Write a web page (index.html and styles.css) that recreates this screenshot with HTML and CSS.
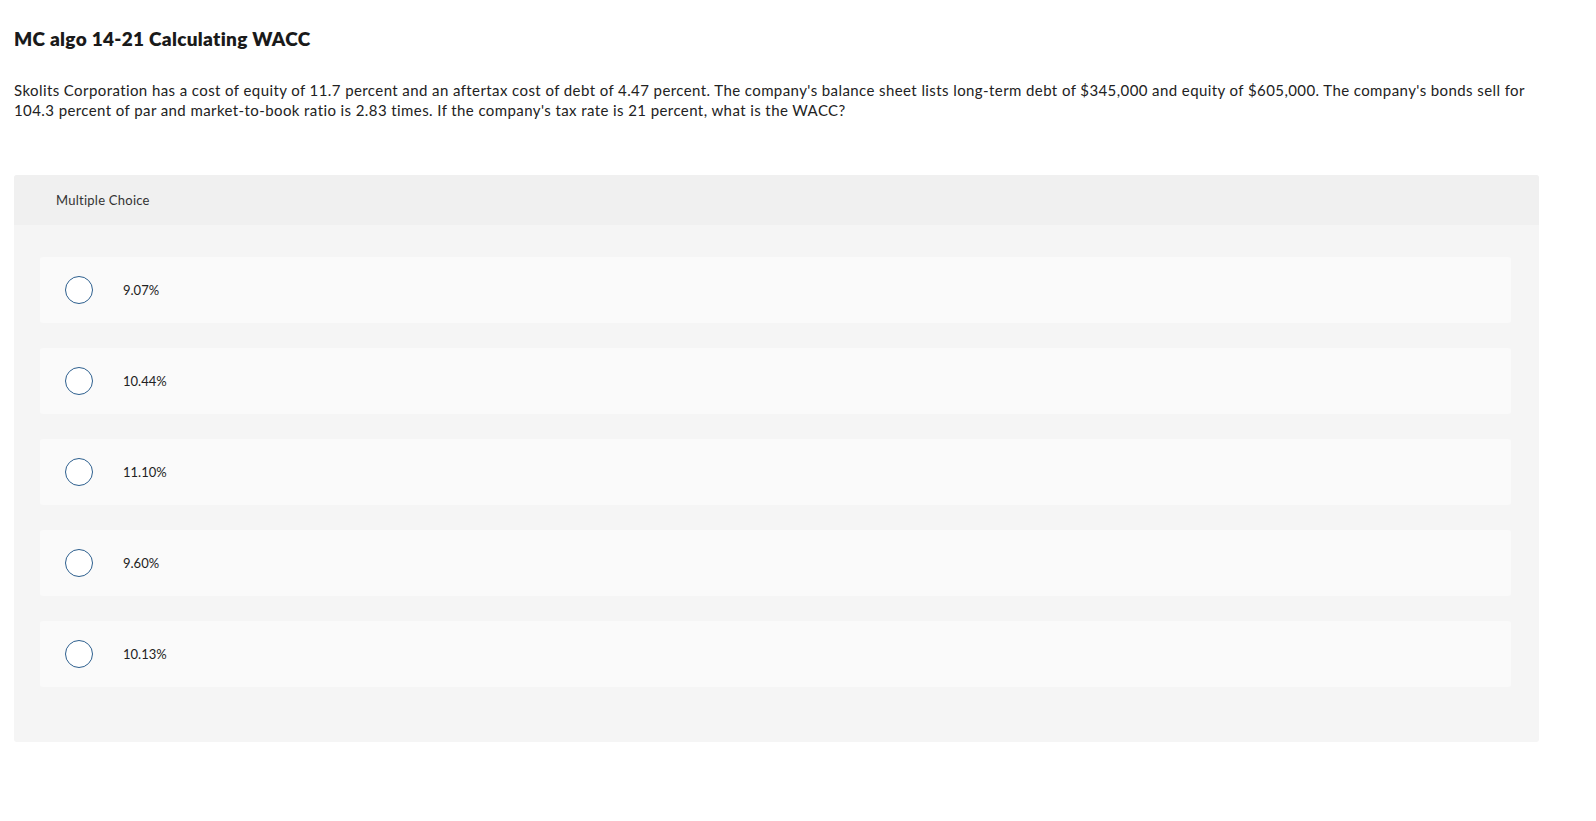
FILE: index.html
```html
<!DOCTYPE html>
<html lang="en">
<head>
<meta charset="utf-8">
<title>MC algo 14-21 Calculating WACC</title>
<link rel="stylesheet" href="styles.css">
</head>
<body>
<main class="page">
  <h1 class="title">MC algo 14-21 Calculating WACC</h1>
  <p class="prompt">Skolits Corporation has a cost of equity of 11.7 percent and an aftertax cost of debt of 4.47 percent. The company's balance sheet lists long-term debt of $345,000 and equity of $605,000. The company's bonds sell for 104.3 percent of par and market-to-book ratio is 2.83 times. If the company's tax rate is 21 percent, what is the WACC?</p>
  <section class="choices">
    <div class="choices-head">Multiple Choice</div>
    <div class="choices-body">
      <label class="option"><span class="radio"></span><span class="opt-text">9.07%</span></label>
      <label class="option"><span class="radio"></span><span class="opt-text">10.44%</span></label>
      <label class="option"><span class="radio"></span><span class="opt-text">11.10%</span></label>
      <label class="option"><span class="radio"></span><span class="opt-text">9.60%</span></label>
      <label class="option"><span class="radio"></span><span class="opt-text">10.13%</span></label>
    </div>
  </section>
</main>
</body>
</html>
```

FILE: styles.css
```css
* { box-sizing: border-box; }
html, body { margin: 0; padding: 0; background: #fff; }
body {
  font-family: "Lato", "Open Sans", "Liberation Sans", sans-serif;
  color: #222;
}
.page {
  width: 1539px;
  padding: 0 0 0 14px;
}
.title {
  margin: 0;
  padding-top: 27px;
  font-size: 19px;
  line-height: 24px;
  font-weight: 800;
  letter-spacing: 0.3px;
  color: #1a1a1a;
}
.prompt {
  margin: 29px 0 0 0;
  font-size: 15px;
  line-height: 20px;
  letter-spacing: 0.41px;
  color: #222;
}
.choices {
  margin-top: 55px;
  border-radius: 3px;
  overflow: hidden;
  background: #f5f5f5;
}
.choices-head {
  height: 50px;
  background: #f0f0f0;
  padding-left: 42px;
  display: flex;
  align-items: center;
  font-size: 13px;
  letter-spacing: 0.25px;
  color: #333;
}
.choices-body {
  padding: 32px 28px 55px 26px;
  display: flex;
  flex-direction: column;
  gap: 25px;
}
.option {
  height: 66px;
  background: #fafafa;
  border-radius: 3px;
  display: flex;
  align-items: center;
  padding-left: 25px;
}
.radio {
  width: 28px;
  height: 28px;
  border: 1.5px solid #2d5f8e;
  border-radius: 50%;
  background: #fff;
  flex: none;
}
.opt-text {
  margin-left: 30px;
  font-size: 13px;
  color: #222;
}
```
